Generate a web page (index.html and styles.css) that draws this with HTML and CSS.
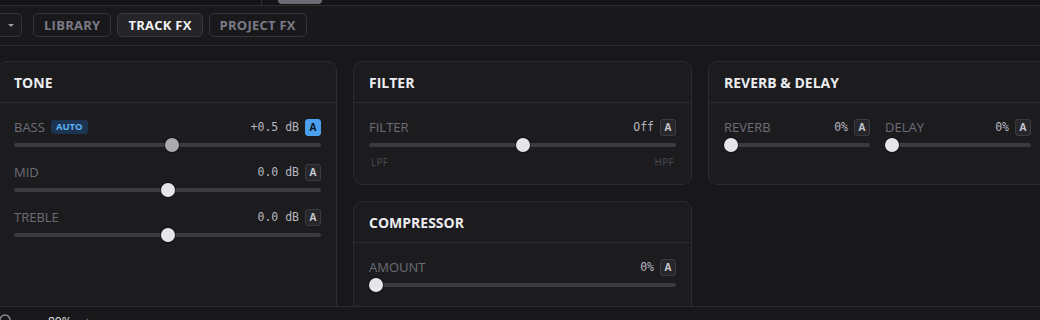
FILE: index.html
```html
<!DOCTYPE html>
<html lang="en">
<head>
<meta charset="utf-8">
<title>Track FX</title>
<link rel="stylesheet" href="styles.css">
</head>
<body>
<div class="app">
  <div class="topstrip">
    <span class="divider"></span>
    <span class="pill"></span>
  </div>
  <div class="toolbar">
    <button class="dd" aria-label="Menu"><span class="tri"></span></button>
    <nav class="tabs">
      <button class="tab">LIBRARY</button>
      <button class="tab active">TRACK FX</button>
      <button class="tab">PROJECT FX</button>
    </nav>
  </div>
  <main class="content">
    <div class="grid">
      <section class="panel tone">
        <header class="panel-head">TONE</header>
        <div class="panel-body stack">
          <div class="ctrl">
            <div class="ctrl-head">
              <span class="label">BASS</span><span class="badge">AUTO</span>
              <span class="value">+0.5 dB</span><span class="abtn on">A</span>
            </div>
            <div class="slider"><span class="thumb dim" style="--p:.514"></span></div>
          </div>
          <div class="ctrl">
            <div class="ctrl-head">
              <span class="label">MID</span>
              <span class="value">0.0 dB</span><span class="abtn">A</span>
            </div>
            <div class="slider"><span class="thumb" style="--p:.5"></span></div>
          </div>
          <div class="ctrl">
            <div class="ctrl-head">
              <span class="label">TREBLE</span>
              <span class="value">0.0 dB</span><span class="abtn">A</span>
            </div>
            <div class="slider"><span class="thumb" style="--p:.5"></span></div>
          </div>
        </div>
      </section>

      <section class="panel filter">
        <header class="panel-head">FILTER</header>
        <div class="panel-body">
          <div class="ctrl">
            <div class="ctrl-head">
              <span class="label">FILTER</span>
              <span class="value">Off</span><span class="abtn">A</span>
            </div>
            <div class="slider"><span class="thumb" style="--p:.5"></span></div>
            <div class="ends"><span>LPF</span><span>HPF</span></div>
          </div>
        </div>
      </section>

      <section class="panel fx">
        <header class="panel-head">REVERB &amp; DELAY</header>
        <div class="panel-body cols">
          <div class="ctrl">
            <div class="ctrl-head">
              <span class="label">REVERB</span>
              <span class="value">0%</span><span class="abtn">A</span>
            </div>
            <div class="slider"><span class="thumb" style="--p:0"></span></div>
          </div>
          <div class="ctrl">
            <div class="ctrl-head">
              <span class="label">DELAY</span>
              <span class="value">0%</span><span class="abtn">A</span>
            </div>
            <div class="slider"><span class="thumb" style="--p:0"></span></div>
          </div>
        </div>
      </section>

      <section class="panel comp">
        <header class="panel-head">COMPRESSOR</header>
        <div class="panel-body">
          <div class="ctrl">
            <div class="ctrl-head">
              <span class="label">AMOUNT</span>
              <span class="value">0%</span><span class="abtn">A</span>
            </div>
            <div class="slider"><span class="thumb" style="--p:0"></span></div>
          </div>
        </div>
      </section>
    </div>
  </main>
  <footer class="status">
    <svg class="zicon" width="14" height="14" viewBox="0 0 14 14"><circle cx="6" cy="6" r="5" fill="none" stroke="#8a8a92" stroke-width="1.5"/></svg>
    <span class="zoom">80%</span>
    <span class="plus">+</span>
  </footer>
</div>
</body>
</html>
```

FILE: styles.css
```css
* { box-sizing: border-box; }
html, body {
  margin: 0;
  padding: 0;
  background: #18181b;
  width: 1040px;
  height: 320px;
  overflow: hidden;
  font-family: "Open Sans", "Noto Sans", sans-serif;
}
.app {
  display: flex;
  flex-direction: column;
  height: 320px;
  overflow: hidden;
}
.topstrip {
  height: 6px;
  flex: none;
  background: #141416;
  border-bottom: 1px solid #2c2c31;
  display: flex;
  align-items: flex-start;
  padding-left: 261px;
}
.divider {
  width: 1px;
  height: 5px;
  background: #2e2e33;
}
.pill {
  margin-left: 16px;
  width: 44px;
  height: 4px;
  background: #6c6c75;
  border-radius: 0 0 5px 5px;
}
.toolbar {
  height: 40px;
  flex: none;
  background: #19191c;
  border-bottom: 1px solid #2c2c31;
  display: flex;
  align-items: center;
  padding-bottom: 1px;
}
button {
  font-family: inherit;
  cursor: default;
}
.dd {
  margin-left: -10px;
  width: 32px;
  height: 24px;
  border: 1px solid #333338;
  border-radius: 5px;
  background: #1b1b1e;
  display: flex;
  align-items: center;
  justify-content: flex-end;
  padding: 0 7px 0 0;
}
.tri {
  width: 0;
  height: 0;
  border-left: 3.5px solid transparent;
  border-right: 3.5px solid transparent;
  border-top: 3.5px solid #9a9aa3;
}
.tabs {
  display: flex;
  gap: 6px;
  margin-left: 11px;
}
.tab {
  height: 24px;
  padding: 0 10px;
  border: 1px solid #333338;
  border-radius: 5px;
  background: transparent;
  color: #7b7b86;
  font-size: 13px;
  font-weight: 700;
  letter-spacing: 0.25px;
  line-height: 22px;
}
.tab.active {
  background: #252528;
  border-color: #38383e;
  color: #f2f2f5;
}
.content {
  flex: none;
  height: 261px;
  overflow: hidden;
  padding-top: 15px;
  border-bottom: 1px solid #2c2c31;
}
.grid {
  margin-left: -2px;
  display: grid;
  grid-template-columns: 339px 339px 339px;
  grid-template-rows: auto auto;
  column-gap: 16px;
  row-gap: 16px;
}
.tone { grid-column: 1; grid-row: 1 / span 2; }
.filter { grid-column: 2; grid-row: 1; }
.fx { grid-column: 3; grid-row: 1; }
.comp { grid-column: 2; grid-row: 2; min-height: 124px; }
.panel {
  background: #1c1c1f;
  border: 1px solid #2b2b30;
  border-radius: 9px;
}
.panel-head {
  height: 41px;
  padding: 0 15px;
  display: flex;
  align-items: center;
  border-bottom: 1px solid #2b2b30;
  color: #ececf0;
  font-size: 14px;
  font-weight: 700;
}
.panel-body {
  padding: 15px 15px 16px 15px;
}
.stack {
  display: flex;
  flex-direction: column;
  gap: 11px;
}
.cols {
  display: grid;
  grid-template-columns: 1fr 1fr;
  column-gap: 15px;
}
.ctrl {
  display: flex;
  flex-direction: column;
  gap: 2px;
}
.ctrl-head {
  height: 18px;
  display: flex;
  align-items: center;
}
.label {
  color: #6c6c77;
  font-size: 13px;
  line-height: 18px;
}
.badge {
  margin-left: 6px;
  height: 14px;
  padding: 0 5px;
  border-radius: 3px;
  background: #1c3450;
  color: #5fb0f5;
  font-size: 9.5px;
  font-weight: 700;
  line-height: 14px;
}
.value {
  margin-left: auto;
  color: #b6b6bf;
  font-family: "DejaVu Sans Mono", "Liberation Mono", monospace;
  font-size: 11.5px;
  line-height: 18px;
}
.abtn {
  margin-left: 6px;
  width: 16px;
  height: 17px;
  border: 1px solid #3b3b42;
  border-radius: 3px;
  background: #27272b;
  color: #c6c6ce;
  font-size: 10px;
  font-weight: 700;
  display: flex;
  align-items: center;
  justify-content: center;
}
.abtn.on {
  background: #4aa0ee;
  border-color: #4aa0ee;
  color: #0e1420;
}
.slider {
  position: relative;
  height: 14px;
}
.slider::before {
  content: "";
  position: absolute;
  left: 0;
  right: 0;
  top: 5px;
  height: 4px;
  border-radius: 2px;
  background: #3b3b41;
}
.thumb {
  position: absolute;
  top: 0;
  left: calc(var(--p) * (100% - 14px));
  width: 14px;
  height: 14px;
  border-radius: 50%;
  background: #e6e6e9;
  box-shadow: 0 0 0 1px rgba(0, 0, 0, 0.35);
}
.thumb.dim { background: #ababaf; }
.ends {
  margin-top: 2px;
  display: flex;
  justify-content: space-between;
  padding: 0 2px;
  color: #4a4a52;
  font-size: 10px;
  line-height: 12px;
  letter-spacing: 0.3px;
}
.status {
  flex: none;
  height: 28px;
  background: #18181b;
  display: flex;
  align-items: center;
  margin-left: -1px;
}
.zicon { flex: none; }
.zoom {
  margin-left: 35px;
  color: #e8e8ec;
  font-size: 12px;
}
.plus {
  margin-left: 12px;
  color: #8a8a92;
  font-size: 12px;
}
```
